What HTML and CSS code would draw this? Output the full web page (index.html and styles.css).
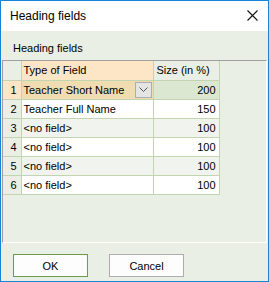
FILE: index.html
```html
<!DOCTYPE html>
<html lang="en">
<head>
    <meta charset="UTF-8">
    <meta name="viewport" content="width=device-width, initial-scale=1.0">
    <title>Heading fields</title>
    <link rel="stylesheet" href="styles.css">
</head>
<body>

    <div class="window">
        <!-- Title bar -->
        <div class="titlebar">
            <span class="title">Heading fields</span>
            <svg class="close" width="11" height="11" viewBox="0 0 11 11">
                <path d="M0.5 0.5 L10.5 10.5 M10.5 0.5 L0.5 10.5" stroke="#111" stroke-width="1.1" fill="none"/>
            </svg>
        </div>

        <div class="content">
            <p class="label">Heading fields</p>

            <!-- Grid -->
            <div class="grid-panel">
                <table class="grid">
                    <tr class="head">
                        <th class="rowhead"></th>
                        <th class="col-type current">Type of Field</th>
                        <th class="col-size">Size (in %)</th>
                    </tr>
                    <tr class="selected">
                        <td class="rowhead current">1</td>
                        <td class="col-type">
                            <div class="combo">
                                <span>Teacher Short Name</span>
                                <span class="drop">
                                    <svg width="9" height="6" viewBox="0 0 9 6">
                                        <path d="M0.5 0.5 L4.5 4.5 L8.5 0.5" stroke="#555" stroke-width="1" fill="none"/>
                                    </svg>
                                </span>
                            </div>
                        </td>
                        <td class="col-size num">200</td>
                    </tr>
                    <tr>
                        <td class="rowhead">2</td>
                        <td class="col-type">Teacher Full Name</td>
                        <td class="col-size num">150</td>
                    </tr>
                    <tr class="alt">
                        <td class="rowhead">3</td>
                        <td class="col-type">&lt;no field&gt;</td>
                        <td class="col-size num">100</td>
                    </tr>
                    <tr>
                        <td class="rowhead">4</td>
                        <td class="col-type">&lt;no field&gt;</td>
                        <td class="col-size num">100</td>
                    </tr>
                    <tr class="alt">
                        <td class="rowhead">5</td>
                        <td class="col-type">&lt;no field&gt;</td>
                        <td class="col-size num">100</td>
                    </tr>
                    <tr>
                        <td class="rowhead">6</td>
                        <td class="col-type">&lt;no field&gt;</td>
                        <td class="col-size num">100</td>
                    </tr>
                </table>
            </div>

            <!-- Buttons -->
            <div class="buttons">
                <button class="btn default">OK</button>
                <button class="btn">Cancel</button>
            </div>
        </div>
    </div>

</body>
</html>
```

FILE: styles.css
```css
* {
    box-sizing: border-box;
}
body {
    margin: 0;
    font-family: "Liberation Sans", Arial, sans-serif;
    font-size: 11px;
    color: #000;
    background: #fff;
}
.window {
    width: 269px;
    height: 282px;
    border: 1px solid #1883d7;
    display: flex;
    flex-direction: column;
    background: #e9efe4;
}
.titlebar {
    height: 30px;
    background: #fff;
    display: flex;
    align-items: center;
    justify-content: space-between;
    padding: 0 10px 0 9px;
}
.title {
    font-size: 12px;
}
.close {
    display: block;
    margin-top: -1px;
}
.content {
    flex: 1;
    padding: 10px 0 0 1px;
}
.label {
    margin: 0 0 5px 11px;
    line-height: 14px;
}
.grid-panel {
    width: 265px;
    height: 183px;
    border: 1px solid #a0a0a0;
    border-right-color: #fff;
    border-bottom-color: #fff;
    background: #e9efe4;
}
.grid {
    border-collapse: collapse;
    table-layout: fixed;
}
.grid th,
.grid td {
    height: 19px;
    padding: 0 2px;
    border-right: 1px solid #c2d5b0;
    border-bottom: 1px solid #c2d5b0;
    font-weight: normal;
    text-align: left;
    white-space: nowrap;
    line-height: 18px;
    background: #fff;
}
.grid .rowhead {
    width: 18px;
    text-align: right;
    padding-right: 4px;
    background: #e9efe4;
}
.grid .col-type {
    width: 132px;
}
.grid .col-size {
    width: 66px;
    padding-left: 3px;
}
.grid .num {
    text-align: right;
    padding-right: 3px;
}
.grid .head th {
    background: #e9efe4;
}
.grid .head th.current,
.grid td.current {
    background: #fde6c6;
}
.grid tr.alt td {
    background: #f1f4ee;
}
.grid tr.alt td.rowhead {
    background: #e9efe4;
}
.grid tr.selected .col-type {
    background: #f0dcb1;
    padding-right: 1px;
}
.grid tr.selected .col-size {
    background: #dce7d2;
}
.combo {
    display: flex;
    align-items: center;
    justify-content: space-between;
}
.drop {
    width: 17px;
    height: 16px;
    border: 1px solid #adadad;
    background: #e5e5e5;
    display: flex;
    align-items: center;
    justify-content: center;
}
.drop svg {
    display: block;
}
.buttons {
    display: flex;
    gap: 21px;
    margin: 11px 0 0 11px;
}
.btn {
    width: 75px;
    height: 23px;
    padding: 0;
    font-family: "Liberation Sans", Arial, sans-serif;
    font-size: 11px;
    color: #000;
    background: #fdfdfd;
    border: 1px solid #adadad;
}
.btn.default {
    border: 1px solid #6f9a4c;
}
```
